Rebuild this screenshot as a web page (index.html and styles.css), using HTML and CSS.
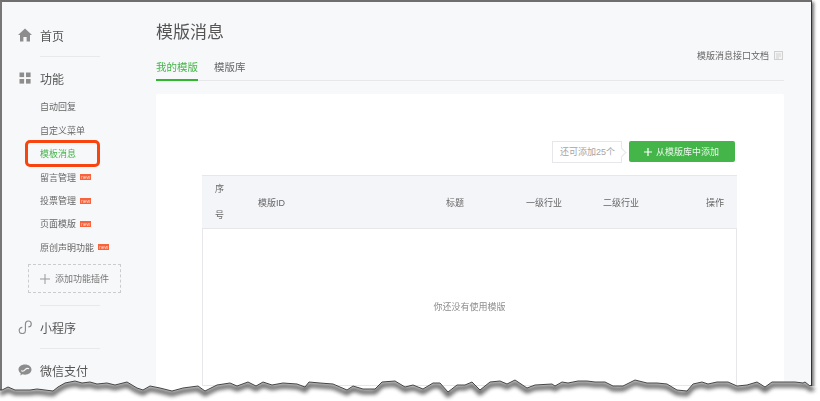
FILE: index.html
```html
<!DOCTYPE html>
<html lang="zh">
<head>
<meta charset="utf-8">
<title>模版消息</title>
<link rel="stylesheet" href="styles.css">
</head>
<body>
<div class="frame">
  <aside class="side">
    <div class="nav-row nav-first">
      <svg class="nav-icon" viewBox="0 0 14 13"><path d="M7 0 L14 6.6 H12 V13 H8.6 V8.6 H5.4 V13 H2 V6.6 H0 Z"/></svg>
      <span>首页</span>
    </div>
    <div class="rule rule-first"></div>
    <div class="nav-row">
      <svg class="nav-icon" viewBox="0 0 14 14"><rect x="1.5" y="1.5" width="4.6" height="4.6"/><rect x="8" y="1.5" width="4.6" height="4.6"/><rect x="1.5" y="8" width="4.6" height="4.6"/><rect x="8" y="8" width="4.6" height="4.6"/></svg>
      <span>功能</span>
    </div>
    <ul class="sub">
      <li>自动回复</li>
      <li>自定义菜单</li>
      <li class="sub-active">模板消息<i class="marker"></i></li>
      <li>留言管理<b class="badge">new</b></li>
      <li>投票管理<b class="badge">new</b></li>
      <li>页面模版<b class="badge">new</b></li>
      <li>原创声明功能<b class="badge">new</b></li>
    </ul>
    <div class="add-box">
      <svg class="add-plus" viewBox="0 0 10 10"><path d="M5 0V10M0 5H10"/></svg>
      <span>添加功能插件</span>
    </div>
    <div class="rule rule-add"></div>
    <div class="nav-row">
      <svg class="nav-icon" viewBox="0 0 13 13"><path class="nav-line" d="M4 6.8 A2.9 2.9 0 1 0 6.9 9.7 V3.6 A2.7 2.7 0 1 1 9.6 6.3"/></svg>
      <span>小程序</span>
    </div>
    <div class="rule"></div>
    <div class="nav-row">
      <svg class="nav-icon" viewBox="0 0 14 12"><path d="M7 0.5 C10.8 0.5 13.5 2.7 13.5 5.6 C13.5 8.5 10.8 10.7 7 10.7 C6 10.7 5.2 10.6 4.4 10.3 L2.4 11.4 L2.7 9.3 C1.3 8.4 0.5 7.1 0.5 5.6 C0.5 2.7 3.2 0.5 7 0.5Z"/><path class="nav-cut" d="M3.2 6.6 C5 8 6.5 6.5 7.4 5.4 C8.3 4.4 9.6 3.8 11 4.8"/></svg>
      <span>微信支付</span>
    </div>
  </aside>

  <main class="main">
    <header class="head">
      <h1 class="title">模版消息</h1>
      <a class="doc">模版消息接口文档
        <svg class="doc-icon" viewBox="0 0 9 9"><rect x="0.5" y="0.5" width="8" height="8"/><path d="M2 3H7M2 5H7M2 7H5"/></svg>
      </a>
    </header>
    <nav class="tabs">
      <a class="tab tab-on">我的模版</a>
      <a class="tab">模版库</a>
    </nav>
    <section class="card">
      <div class="tools">
        <span class="quota">还可添加25个</span>
        <button class="add-btn"><svg class="btn-plus" viewBox="0 0 8 8"><path d="M4 0V8M0 4H8"/></svg>从模版库中添加</button>
      </div>
      <table class="tpl">
        <thead>
          <tr>
            <th class="c-no">序号</th>
            <th class="c-id">模版ID</th>
            <th class="c-title">标题</th>
            <th class="c-ind1">一级行业</th>
            <th class="c-ind2">二级行业</th>
            <th class="c-op">操作</th>
          </tr>
        </thead>
        <tbody>
          <tr><td class="empty" colspan="6">你还没有使用模版</td></tr>
        </tbody>
      </table>
    </section>
  </main>
</div>

<svg class="torn" viewBox="0 0 820 401">
  <defs>
    <clipPath id="below"><polygon points="0,390 2,390 8,387 15,390 30,390 37,389 53,391 58,387 65,383 75,381 82,383 90,382 97,384 107,383 115,385 127,382 137,388 143,390 150,386 160,388 172,391 183,388 198,386 205,391 217,385 230,383 237,386 248,382 256,386 263,382 272,385 283,383 297,384 305,387 309,382 320,383 333,384 347,390 353,386 363,389 375,389 382,382 395,381 405,387 413,385 423,389 433,383 440,383 448,392 457,385 465,385 472,382 480,390 490,382 500,381 507,384 515,380 527,388 535,385 552,384 555,386 562,382 568,383 578,381 587,381 595,382 605,382 613,386 623,386 635,380 647,383 657,383 667,384 677,390 687,391 693,384 702,382 708,384 717,382 728,382 737,386 747,385 757,382 765,387 772,382 787,382 795,382 803,383 805,382 810,386 812,386 820,386 820,401 0,401"/></clipPath>
    <filter id="soft" x="-5%" y="-100%" width="110%" height="300%"><feGaussianBlur stdDeviation="2"/></filter>
  </defs>
  <rect class="torn-paper" x="0" y="370" width="820" height="31" clip-path="url(#below)"/>
  <g clip-path="url(#below)">
    <polyline class="torn-shadow" filter="url(#soft)" points="0,393 2,393 8,390 15,393 30,393 37,392 53,394 58,390 65,386 75,384 82,386 90,385 97,387 107,386 115,388 127,385 137,391 143,393 150,389 160,391 172,394 183,391 198,389 205,394 217,388 230,386 237,389 248,385 256,389 263,385 272,388 283,386 297,387 305,390 309,385 320,386 333,387 347,393 353,389 363,392 375,392 382,385 395,384 405,390 413,388 423,392 433,386 440,386 448,395 457,388 465,388 472,385 480,393 490,385 500,384 507,387 515,383 527,391 535,388 552,387 555,389 562,385 568,386 578,384 587,384 595,385 605,385 613,389 623,389 635,383 647,386 657,386 667,387 677,393 687,394 693,387 702,385 708,387 717,385 728,385 737,389 747,388 757,385 765,390 772,385 787,385 795,385 803,386 805,385 810,389 814,389"/>
  </g>
  <polyline class="torn-line" points="0,390 2,390 8,387 15,390 30,390 37,389 53,391 58,387 65,383 75,381 82,383 90,382 97,384 107,383 115,385 127,382 137,388 143,390 150,386 160,388 172,391 183,388 198,386 205,391 217,385 230,383 237,386 248,382 256,386 263,382 272,385 283,383 297,384 305,387 309,382 320,383 333,384 347,390 353,386 363,389 375,389 382,382 395,381 405,387 413,385 423,389 433,383 440,383 448,392 457,385 465,385 472,382 480,390 490,382 500,381 507,384 515,380 527,388 535,385 552,384 555,386 562,382 568,383 578,381 587,381 595,382 605,382 613,386 623,386 635,380 647,383 657,383 667,384 677,390 687,391 693,384 702,382 708,384 717,382 728,382 737,386 747,385 757,382 765,387 772,382 787,382 795,382 803,383 805,382 810,386 811,385"/>
</svg>
</body>
</html>
```

FILE: styles.css
```css
* { box-sizing: border-box; }
html, body {
  margin: 0;
  height: 100%;
  overflow: hidden;
  background: #fff;
}
body {
  font-family: "Liberation Sans", "Noto Sans CJK SC", sans-serif;
  color: #555;
}
.frame {
  display: flex;
  width: 812px;
  height: 401px;
  overflow: hidden;
  background: #f7f8fa;
  border-top: 2px solid #6f6f6f;
  border-left: 2px solid #777;
  border-right: 1px solid #333;
  box-shadow: 2px 2px 3px rgba(0, 0, 0, .55);
  filter: blur(.35px);
}

/* sidebar */
.side { flex: 0 0 154px; width: 154px; }
.nav-row {
  display: flex;
  align-items: center;
  height: 28px;
  margin-top: 7px;
  padding-left: 16px;
  font-size: 12px;
  color: #555;
}
.nav-first { margin-top: 19px; }
.nav-icon { width: 14px; height: 14px; margin-right: 8px; fill: #8d8d8d; }
.nav-line { fill: none; stroke: #8d8d8d; stroke-width: 1.1; }
.nav-cut { fill: none; stroke: #f7f8fa; stroke-width: 1.2; }
.rule { width: 60px; height: 1px; margin: 7px 0 0 38px; background: #e9e9ec; }
.rule-first { margin-top: 7px; }
.rule-add { margin-top: 12px; }
.sub { list-style: none; margin: 3.3px 0 0; padding: 0 0 0 38px; }
.sub li {
  position: relative;
  display: flex;
  align-items: center;
  height: 23.4px;
  font-size: 9px;
  color: #666;
}
.sub .sub-active { color: #44b549; }
.marker {
  position: absolute;
  left: -15px;
  top: -2px;
  width: 75px;
  height: 27px;
  border: 3px solid #f8440e;
  border-radius: 5px;
}
.badge {
  display: block;
  width: 11px;
  height: 6px;
  margin-left: 4px;
  background: #f9623a;
  color: #ffd9cc;
  font-size: 5px;
  font-weight: 400;
  line-height: 6px;
  text-align: center;
}
.add-box {
  display: flex;
  align-items: center;
  width: 93px;
  height: 29px;
  margin: 5px 0 0 26px;
  padding-left: 11px;
  border: 1px dashed #ccc;
  font-size: 9px;
  color: #777;
}
.add-plus { width: 10px; height: 10px; margin-right: 5px; fill: none; stroke: #999; stroke-width: 1; }

/* main */
.main { flex: 0 0 628px; width: 628px; padding-top: 19px; }
.head { display: flex; justify-content: space-between; height: 41px; }
.title { margin: 0; font-size: 17px; font-weight: 400; line-height: 24px; color: #555; }
.doc {
  display: flex;
  align-items: center;
  align-self: flex-end;
  gap: 5px;
  height: 14px;
  padding-right: 1px;
  font-size: 9px;
  color: #666;
}
.doc-icon { width: 9px; height: 9px; fill: #f4f4f4; stroke: #d0d0d0; stroke-width: 1; }
.tabs { display: flex; gap: 16px; height: 19px; border-bottom: 1px solid #e7e7eb; }
.tab {
  height: 19px;
  padding-bottom: 6px;
  font-size: 10.5px;
  line-height: 11px;
  color: #666;
}
.tab-on { color: #44b549; border-bottom: 2px solid #2fb82f; }
.card {
  height: 400px;
  margin-top: 13px;
  padding: 47px 47px 0 46px;
  background: #fff;
  border-radius: 2px;
}
.tools { display: flex; justify-content: flex-end; align-items: flex-start; height: 34px; padding-right: 2px; }
.quota {
  position: relative;
  width: 70px;
  height: 22px;
  margin-right: 7px;
  padding-left: 7px;
  border: 1px solid #e7e7eb;
  background: #fff;
  font-size: 9px;
  line-height: 21px;
  color: #a5a5a5;
}
.quota::after {
  content: "";
  position: absolute;
  right: -4px;
  top: 7px;
  width: 6px;
  height: 6px;
  border-top: 1px solid #e7e7eb;
  border-right: 1px solid #e7e7eb;
  background: #fff;
  transform: rotate(45deg);
}
.add-btn {
  display: flex;
  align-items: center;
  width: 106px;
  height: 21px;
  padding: 0 0 0 15px;
  border: 0;
  border-radius: 2px;
  background: #44b549;
  color: #e9f7ea;
  font: inherit;
  font-size: 9px;
}
.btn-plus { width: 8px; height: 8px; margin-right: 4px; fill: none; stroke: #fff; stroke-width: 1.2; }

.tpl {
  width: 535px;
  table-layout: fixed;
  border-collapse: separate;
  border-spacing: 0;
  font-size: 9px;
}
.tpl th {
  height: 51px;
  padding: 0;
  background: #f4f5f9;
  border-top: 1px solid #e7e7eb;
  border-bottom: 1px solid #e7e7eb;
  font-weight: 400;
  text-align: left;
  color: #666;
}
.c-no { width: 56px; padding-left: 13px !important; padding-right: 31px !important; line-height: 26px; }
.c-id { width: 188px; }
.c-title { width: 80px; }
.c-ind1 { width: 77px; }
.c-ind2 { width: 77px; }
.c-op { text-align: right !important; padding-right: 13px !important; }
.empty {
  height: 157px;
  padding-bottom: 2px;
  border: 1px solid #e7e7eb;
  border-top: 0;
  text-align: center;
  color: #8d8d8d;
}

/* torn bottom edge of the screenshot */
.torn { position: absolute; left: 0; top: 0; width: 820px; height: 401px; }
.torn-paper { fill: #fff; }
.torn-shadow { fill: none; stroke: #000; stroke-width: 4; opacity: .7; }
.torn-line { fill: none; stroke: #333; stroke-width: .9; }
```
